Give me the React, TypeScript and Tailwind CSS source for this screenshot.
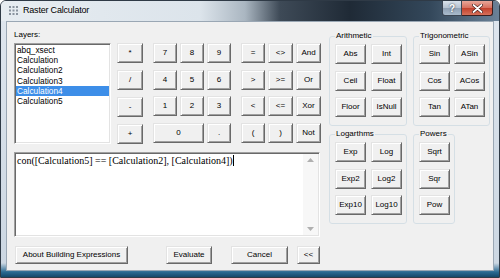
import React from 'react';

// classic raised button look
const raised =
  'bg-[#f0f0f0] border border-t-[#e3e3e3] border-l-[#e3e3e3] border-r-[#696969] border-b-[#696969] shadow-[inset_1px_1px_0_#ffffff,inset_-1px_-1px_0_#a0a0a0] text-black flex items-center justify-center leading-none text-[8px] h-[20px]';

const Btn = ({ label, className = '' }: { label: string; className?: string }) => (
  <button type="button" className={`${raised} ${className}`}>
    {label}
  </button>
);

const Group = ({
  title,
  className = '',
  children,
}: {
  title: string;
  className?: string;
  children: React.ReactNode;
}) => (
  <fieldset className={`border border-[#d5dfe5] rounded-[3px] pl-[5px] pt-[3px] pb-[8px] ${className}`}>
    <legend className="px-[1px] text-[8px] leading-[10px] text-black">{title}</legend>
    {children}
  </fieldset>
);

const layers = ['abq_xsect', 'Calculation', 'Calculation2', 'Calculation3', 'Calculation4', 'Calculation5'];

export default function App() {
  return (
    <div className="w-[500px] h-[278px] flex flex-col border border-[#2f3a46] rounded-t-[6px] overflow-hidden bg-[linear-gradient(to_bottom,#dfe6ee_0px,#ccd7e2_262px,#2b6a92_271px,#0d3a5a_278px)] font-['Liberation_Sans',Arial,sans-serif]">
      {/* title bar */}
      <div className="h-[20px] flex items-center relative bg-[linear-gradient(to_right,#e6ecf1_0%,#dce4eb_40%,#aab6c1_49%,#3e4a57_56%,#1f2a36_70%,#33475a_86%,#6b8298_100%)]">
        <svg width="10" height="10" viewBox="0 0 10 10" className="ml-[8px]">
          {[0, 1, 2].map((r) =>
            [0, 1, 2].map((c) => (
              <rect key={`${r}${c}`} x={c * 3.5} y={r * 3.5} width="2" height="2" fill="#8a949f" />
            ))
          )}
        </svg>
        <span className="ml-[4px] text-[9px] tracking-[-0.2px] text-black [text-shadow:0_0_6px_#ffffff]">Raster Calculator</span>
        <div className="ml-auto mr-[6px] flex self-start">
          <div className="w-[20px] h-[15px] rounded-bl-[3px] border border-t-0 border-[#3b4654] bg-[linear-gradient(to_bottom,#d9e2ec_0%,#b4c2d1_50%,#8ea0b4_51%,#a9bbcc_100%)] flex items-center justify-center text-white text-[10px] font-bold [text-shadow:0_0_2px_#1b2633]">
            ?
          </div>
          <div className="w-[31px] h-[15px] rounded-br-[3px] border border-t-0 border-l-0 border-[#3b2020] bg-[linear-gradient(to_bottom,#e8a799_0%,#d7705f_48%,#c2412c_52%,#d5705a_100%)] flex items-center justify-center">
            <svg width="11" height="9" viewBox="0 0 11 9">
              <path d="M1.5 1 L9.5 8 M9.5 1 L1.5 8" stroke="#3a1410" strokeWidth="3" strokeLinecap="round" />
              <path d="M1.5 1 L9.5 8 M9.5 1 L1.5 8" stroke="#ffffff" strokeWidth="1.8" strokeLinecap="round" />
            </svg>
          </div>
        </div>
      </div>

      {/* client area */}
      <div className="flex-1 mx-[5px] mb-[6px] border border-[#9aa7b4] bg-[#f0f0f0] flex pl-[7px] gap-[8px] text-black">
        {/* left side */}
        <div className="w-[307px] flex flex-col">
          <div className="h-[21px] pt-[8px] text-[8px] leading-[10px]">Layers:</div>
          <div className="flex gap-[6px]">
            <div className="w-[97px] h-[101px] bg-white border border-t-[#a0a0a0] border-l-[#a0a0a0] border-r-white border-b-white shadow-[inset_1px_1px_0_#696969,inset_-1px_-1px_0_#e3e3e3] pt-[1px] pl-[1px] pr-[1px]">
              {layers.map((l) => (
                <div
                  key={l}
                  className={`h-[10.2px] leading-[10.2px] text-[8.3px] pl-[1px] ${l === 'Calculation4' ? 'bg-[#3d8ee8] text-white' : 'text-black'}`}
                >
                  {l}
                </div>
              ))}
            </div>
            <div className="flex gap-[10px]">
              <div className="grid grid-cols-[26px] gap-y-[6.5px]">
                <Btn label="*" />
                <Btn label="/" />
                <Btn label="-" />
                <Btn label="+" />
              </div>
              <div className="grid grid-cols-[24px_24px_24px] gap-x-[3px] gap-y-[6.5px] h-fit">
                <Btn label="7" />
                <Btn label="8" />
                <Btn label="9" />
                <Btn label="4" />
                <Btn label="5" />
                <Btn label="6" />
                <Btn label="1" />
                <Btn label="2" />
                <Btn label="3" />
                <Btn label="0" className="col-span-2" />
                <Btn label="." />
              </div>
              <div className="grid grid-cols-[24px_25px_25px] gap-x-[3px] gap-y-[6.5px] h-fit">
                <Btn label="=" />
                <Btn label="<>" />
                <Btn label="And" />
                <Btn label=">" />
                <Btn label=">=" />
                <Btn label="Or" />
                <Btn label="<" />
                <Btn label="<=" />
                <Btn label="Xor" />
                <Btn label="(" />
                <Btn label=")" />
                <Btn label="Not" />
              </div>
            </div>
          </div>

          {/* expression box */}
          <div className="mt-[8px] w-[306px] h-[85px] flex bg-white border border-t-[#a0a0a0] border-l-[#a0a0a0] border-r-white border-b-white shadow-[inset_1px_1px_0_#696969,inset_-1px_-1px_0_#e3e3e3]">
            <div className="flex-1 pl-[2px] pt-[2px] font-['Liberation_Serif','Times_New_Roman',serif] text-[10px] leading-[12px] whitespace-nowrap">
              con([Calculation5] == [Calculation2], [Calculation4])
              <span className="inline-block w-[1px] h-[11px] bg-black align-[-2px]" />
            </div>
            <div className="w-[15px] mt-[1px] mb-[1px] mr-[1px] bg-[#f7f7f7] flex flex-col items-center justify-between py-[4px]">
              <svg width="7" height="4" viewBox="0 0 7 4">
                <path d="M0 4 L3.5 0 L7 4 Z" fill="#b0b0b0" />
              </svg>
              <svg width="7" height="4" viewBox="0 0 7 4">
                <path d="M0 0 L3.5 4 L7 0 Z" fill="#b0b0b0" />
              </svg>
            </div>
          </div>

          {/* bottom buttons */}
          <div className="mt-[9px] flex">
            <Btn label="About Building Expressions" className="w-[113px] !h-[18px] ml-[1px]" />
            <Btn label="Evaluate" className="w-[46px] !h-[18px] ml-[38px]" />
            <Btn label="Cancel" className="w-[57px] !h-[18px] ml-[19px]" />
            <Btn label="<<" className="w-[23px] !h-[18px] ml-[9px]" />
          </div>
        </div>

        {/* right side */}
        <div className="pt-[9px] flex flex-col">
          <div className="flex gap-[6px]">
            <Group title="Arithmetic" className="w-[78px]">
              <div className="grid grid-cols-[31px_31px] gap-x-[5px] gap-y-[6.5px]">
                <Btn label="Abs" />
                <Btn label="Int" />
                <Btn label="Ceil" />
                <Btn label="Float" />
                <Btn label="Floor" />
                <Btn label="IsNull" />
              </div>
            </Group>
            <Group title="Trigonometric" className="w-[77px]">
              <div className="grid grid-cols-[31px_31px] gap-x-[4px] gap-y-[6.5px]">
                <Btn label="Sin" />
                <Btn label="ASin" />
                <Btn label="Cos" />
                <Btn label="ACos" />
                <Btn label="Tan" />
                <Btn label="ATan" />
              </div>
            </Group>
          </div>
          <div className="mt-[3px] flex gap-[6px]">
            <Group title="Logarthms" className="w-[78px]">
              <div className="grid grid-cols-[31px_31px] gap-x-[5px] gap-y-[6.5px]">
                <Btn label="Exp" />
                <Btn label="Log" />
                <Btn label="Exp2" />
                <Btn label="Log2" />
                <Btn label="Exp10" />
                <Btn label="Log10" />
              </div>
            </Group>
            <Group title="Powers" className="w-[42px]">
              <div className="grid grid-cols-[31px] gap-y-[6.5px]">
                <Btn label="Sqrt" />
                <Btn label="Sqr" />
                <Btn label="Pow" />
              </div>
            </Group>
          </div>
        </div>
      </div>
    </div>
  );
}
